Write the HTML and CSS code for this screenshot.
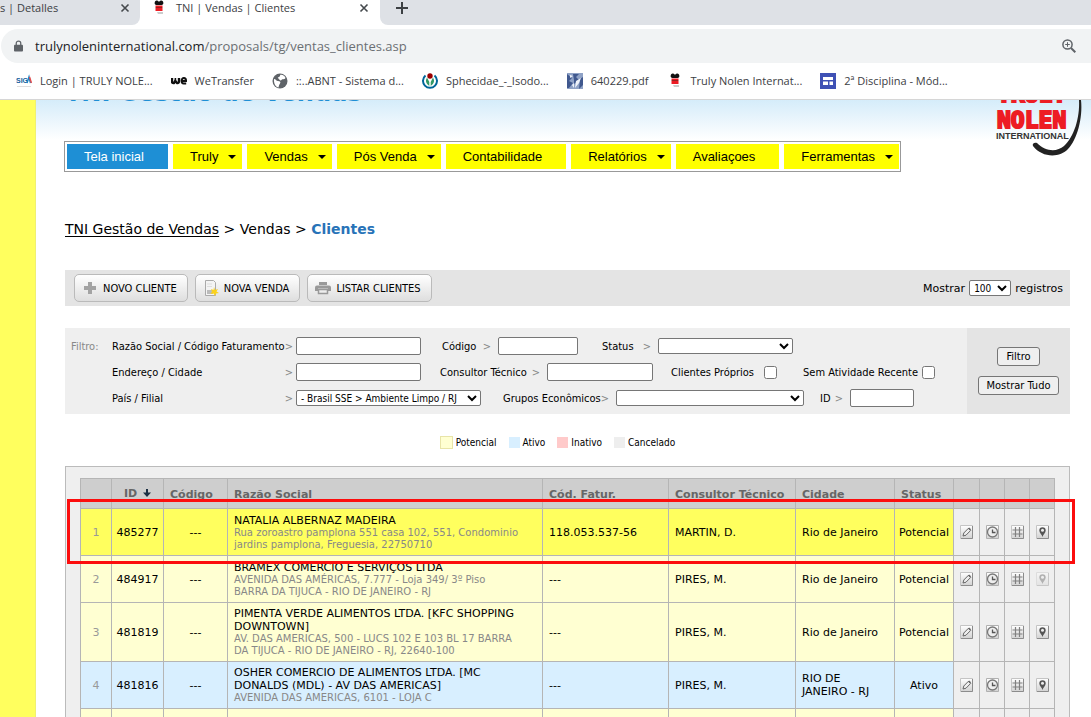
FILE: index.html
```
<!DOCTYPE html>
<html lang="pt-BR">
<head>
<meta charset="utf-8">
<title>TNI | Vendas | Clientes</title>
<link rel="stylesheet" href="styles.css">
</head>
<body>
<svg class="defs" aria-hidden="true">
  <defs>
    <linearGradient id="tile" x1="0" y1="0" x2="0" y2="1"><stop offset="0" stop-color="#fff"/><stop offset="1" stop-color="#d2d2d2"/></linearGradient>
    <symbol id="i-edit" viewBox="0 0 13 14"><path d="M.5.5h12v13h-12z" fill="url(#tile)" stroke="#c4c4c4"/><path d="M12.5 1v12.500H1" fill="none" stroke="#8c8c8c"/><path d="M3 11l.8-3L8.500 3.200l2.200 2.200L6 10.200z" fill="#eee" stroke="#666"/><path d="M8 3.500l1.200-1 1.800 1.800-1 1.200z" fill="#666"/></symbol>
    <symbol id="i-clock" viewBox="0 0 13 14"><path d="M.5.5h12v13h-12z" fill="url(#tile)" stroke="#b0b0b0"/><circle cx="6.500" cy="7" r="5" fill="#eee" stroke="#777" stroke-width="1.300"/><path d="M6.500 4.500v3h3" fill="none" stroke="#555" stroke-width="1.300"/></symbol>
    <symbol id="i-grid" viewBox="0 0 13 14"><path d="M.5.5h12v13h-12z" fill="url(#tile)" stroke="#c4c4c4"/><path d="M12.500 1v12.500H1" fill="none" stroke="#8c8c8c"/><path d="M4.500 2v10M8.500 2v10M1.500 5h10M1.500 9h10" stroke="#808080" stroke-width="1.200"/></symbol>
    <symbol id="i-pin" viewBox="0 0 13 14"><path d="M.5.5h12v13h-12z" fill="url(#tile)" stroke="#c4c4c4"/><path d="M12.500 1v12.500H1" fill="none" stroke="#8c8c8c"/><path d="M6.500 12C6 9.500 3.300 8 3.300 5.500a3.200 3.200 0 0 1 6.400 0C9.700 8 7 9.500 6.500 12z" fill="#555"/><circle cx="6.500" cy="5.300" r="1.500" fill="#eee"/></symbol>
    <symbol id="i-ant" viewBox="0 0 16 16"><path d="M4 1.500c1.200-1.500 3-1 4 .5 1-1.500 2.800-2 4-.5 1 2 0 3.500-1.500 3.500h-5C4 5 3 3.500 4 1.500z" fill="#111"/><path d="M4.500 5.500h7V7h-7zM4.500 8h7v3h-7z" fill="#ed1c24"/><path d="M4.500 7h7v1h-7z" fill="#922"/><path d="M6 12h6v2H7z" fill="#ccc"/></symbol>
    <symbol id="i-close" viewBox="0 0 10 10"><path d="M1.500 1.500l7 7M8.500 1.500l-7 7" stroke="#45494d" stroke-width="1.600"/></symbol>
  </defs>
</svg>

<header class="browser">
  <div class="tabs">
    <div class="tab tab-idle"><span>s | Detalles</span><svg class="close"><use href="#i-close"/></svg></div>
    <div class="tab tab-active"><svg class="fav"><use href="#i-ant"/></svg><span>TNI | Vendas | Clientes</span><svg class="close"><use href="#i-close"/></svg></div>
    <div class="tab-rest"><svg class="plus" viewBox="0 0 12 12"><path d="M6 0v12M0 6h12" stroke="#3c4043" stroke-width="2"/></svg></div>
  </div>
  <div class="address">
    <svg class="lock" viewBox="0 0 10 12"><path d="M1 4.500h8q1 0 1 1V11q0 1-1 1H1q-1 0-1-1V5.500q0-1 1-1z" fill="#5f6368"/><path d="M2.500 5V3a2.500 2.300 0 0 1 5 0v2" fill="none" stroke="#5f6368" stroke-width="1.400"/></svg>
    <span class="url"><b>trulynoleninternational.com</b>/proposals/tg/ventas_clientes.asp</span>
    <svg class="lens" viewBox="0 0 14 14"><circle cx="5.500" cy="5.500" r="4.600" fill="none" stroke="#5f6368" stroke-width="1.500"/><path d="M9 9l4.300 4.300" stroke="#5f6368" stroke-width="2"/><path d="M5.500 3.200v4.600M3.200 5.500h4.600" stroke="#5f6368"/></svg>
  </div>
  <nav class="bookmarks">
    <a href="#"><svg viewBox="0 0 16 16"><text x="0" y="10" class="siga">SIG</text><path d="M11 10l2-6 1.500 6" fill="none" stroke="#1d84c6" stroke-width="1.500"/><path d="M13.500 4l2 6" stroke="#e34b4b" stroke-width="1.500"/><path d="M1 13.500h14" stroke="#ddd"/></svg>Login | TRULY NOLE...</a>
    <a href="#"><svg viewBox="0 0 16 16"><path d="M1 5v3.500q0 2 2 1.500l1.300-2L6 10q2 .5 2-2V5" fill="none" stroke="#111" stroke-width="2.400"/><path d="M4.400 5v4" stroke="#111" stroke-width="1.600"/><path d="M15.200 10.500h-2.500A2.200 2.700 0 1 1 15 8h-4" fill="none" stroke="#111" stroke-width="2"/></svg>WeTransfer</a>
    <a href="#"><svg viewBox="0 0 16 16"><circle cx="8" cy="8" r="7.500" fill="#5f6368"/><path d="M2 6c2 0 2 2 4 2s3 1 2 2.500-1 2-1.500 4C4 14 1.500 11 2 6zM8 2c2-1 5 1 5.500 3-1 2-3 .5-4 2S7 6 6 5s3-1 2-3z" fill="#fff"/></svg>::..ABNT - Sistema d...</a>
    <a href="#"><svg viewBox="0 0 16 16"><path d="M3.500 2.500A7 7 0 1 0 12.500 2.500" fill="none" stroke="#069" stroke-width="2"/><path d="M5 4.500q-3 5 2.300 8.500V9zM11 4.500q3 5-2.300 8.500V9z" fill="#396"/><circle cx="8" cy="3" r="2.700" fill="#900"/></svg>Sphecidae_-_Isodo...</a>
    <a href="#"><svg viewBox="0 0 16 16"><path d="M0 0h16v16H0z" fill="#8fa2c6"/><path d="M0 1l5 4-3 3 4 2-4 5H0zM6 1h6l-3 3 3 3-5 4V7zM13 6l3-2v8l-4 4z" fill="#40588e"/><path d="M3 2l3 1-3 2zM9 8l5-3-2 5-4 5zM5 12l2-2v5z" fill="#eef2fa"/></svg>640229.pdf</a>
    <a href="#"><svg viewBox="0 0 16 16"><use href="#i-ant"/></svg>Truly Nolen Internat...</a>
    <a href="#"><svg viewBox="0 0 16 16"><path d="M0 0h16v16H0z" fill="#3f51b5"/><path d="M3 4h10v3H3zM3 8.500h5V12H3zM9.500 8.500H13V12H9.500z" fill="#fff"/></svg>2ª Disciplina - Mód...</a>
  </nav>
</header>

<div class="page">
  <aside class="stripe"></aside>
  <main class="content">
    <div class="masthead">
      <h1>TNI Gestão de Vendas</h1>
      <svg class="logo" viewBox="0 0 94 60" role="img" aria-label="Truly Nolen International">
        <text x="6" y="2" class="logo-name">TRULY</text>
        <text x="6" y="28" class="logo-name">NOLEN</text>
        <text x="5" y="39" class="logo-sub">INTERNATIONAL</text>
        <path d="M90 0c2 18-4 40-13 49-8 9-26 9-35-3-1-2 1-4 4-3 9 9 20 9 27 3 10-9 16-28 15-46z" fill="#222"/>
      </svg>
    </div>
    <nav class="menu">
      <a href="#" class="current">Tela inicial</a>
      <a href="#" class="more">Truly</a>
      <a href="#" class="more">Vendas</a>
      <a href="#" class="more">Pós Venda</a>
      <a href="#">Contabilidade</a>
      <a href="#" class="more">Relatórios</a>
      <a href="#">Avaliaçoes</a>
      <a href="#" class="more">Ferramentas</a>
    </nav>
    <p class="crumbs"><a href="#">TNI Gestão de Vendas</a> &gt; Vendas &gt; <strong>Clientes</strong></p>

    <div class="toolbar">
      <button type="button"><svg viewBox="0 0 16 16"><path d="M6 2h4v4h4v4h-4v4H6v-4H2V6h4z" fill="#a3a3a3"/></svg>NOVO CLIENTE</button>
      <button type="button"><svg viewBox="0 0 16 16"><path d="M2.500.5h8l2 2v13h-10z" fill="#f4f4f4" stroke="#aaa"/><path d="M4 10h6v4H4z" fill="#bbb"/><path d="M4 4h5M4 6.500h5" stroke="#ddd"/><path d="M11 7l1 3 3-1-1.500 2.500L16 13l-3 .5-1 2.500-1.500-2.500-3 .5 1.500-2.500L8 9l2.500 1z" fill="#fbd21c"/></svg>NOVA VENDA</button>
      <button type="button"><svg viewBox="0 0 16 16"><path d="M4 2h8v3H4zM2 5.500h12q2 0 2 2V11h-3V8.500H3V11H0V7.500q0-2 2-2z" fill="#999"/><path d="M3.500 9.500h9v4h-9z" fill="#eee" stroke="#999" stroke-width="1.500"/></svg>LISTAR CLIENTES</button>
      <label class="page-size">Mostrar <select><option>100</option></select> registros</label>
    </div>

    <form class="filter">
      <div class="fields">
        <div class="line">
          <span class="legend-title">Filtro:</span>
          <label class="lead" for="razao">Razão Social / Código Faturamento <i>&gt;</i></label><input id="razao" class="w-text">
          <label class="l-codigo" for="codigo">Código <i>&gt;</i></label><input id="codigo" class="w-codigo">
          <label class="l-status" for="status">Status <i>&gt;</i></label><select id="status" class="w-status"><option></option></select>
        </div>
        <div class="line">
          <span class="legend-title"></span>
          <label class="lead" for="endereco">Endereço / Cidade <i>&gt;</i></label><input id="endereco" class="w-text">
          <label class="l-consultor" for="consultor">Consultor Técnico <i>&gt;</i></label><input id="consultor" class="w-consultor">
          <label class="l-proprios" for="proprios">Clientes Próprios</label><input id="proprios" type="checkbox">
          <label class="l-recente" for="recente">Sem Atividade Recente</label><input id="recente" type="checkbox">
        </div>
        <div class="line">
          <span class="legend-title"></span>
          <label class="lead" for="pais">País / Filial <i>&gt;</i></label><select id="pais" class="w-pais"><option>- Brasil SSE &gt; Ambiente Limpo / RJ</option></select>
          <label class="l-grupos" for="grupos">Grupos Econômicos <i>&gt;</i></label><select id="grupos" class="w-grupos"><option></option></select>
          <label class="l-id" for="id">ID <i>&gt;</i></label><input id="id" class="w-id">
        </div>
      </div>
      <div class="actions">
        <button type="button">Filtro</button>
        <button type="button">Mostrar Tudo</button>
      </div>
    </form>

    <ul class="key">
      <li class="k-potencial">Potencial</li>
      <li class="k-ativo">Ativo</li>
      <li class="k-inativo">Inativo</li>
      <li class="k-cancelado">Cancelado</li>
    </ul>

    <section class="results">
      <table>
        <colgroup><col class="c-n"><col class="c-id"><col class="c-cod"><col class="c-razao"><col class="c-fat"><col class="c-cons"><col class="c-cid"><col class="c-st"><col class="c-iw"><col class="c-ic"><col class="c-ic"><col class="c-ic"></colgroup>
        <thead>
          <tr><th></th><th class="mid">ID <svg class="sort" viewBox="0 0 8 9"><path d="M4 0v4" stroke="#1b2f42" stroke-width="2"/><path d="M0 3.500h8L4 8z" fill="#1b2f42"/></svg></th><th>Código</th><th>Razão Social</th><th>Cód. Fatur.</th><th>Consultor Técnico</th><th>Cidade</th><th>Status</th><th></th><th></th><th></th><th></th></tr>
        </thead>
        <tbody>
          <tr class="potencial marked"><td class="num">1</td><td class="mid">485277</td><td class="mid">---</td><td>NATALIA ALBERNAZ MADEIRA<small>Rua zoroastro pamplona 551 casa 102, 551, Condominio jardins pamplona, Freguesia, 22750710</small></td><td>118.053.537-56</td><td>MARTIN, D.</td><td>Rio de Janeiro</td><td class="mid">Potencial</td>
            <td class="act"><button aria-label="Editar"><svg><use href="#i-edit"/></svg></button></td><td class="act"><button aria-label="Histórico"><svg><use href="#i-clock"/></svg></button></td><td class="act"><button aria-label="Tabela"><svg><use href="#i-grid"/></svg></button></td><td class="act"><button aria-label="Mapa"><svg><use href="#i-pin"/></svg></button></td></tr>
          <tr class="potencial"><td class="num">2</td><td class="mid">484917</td><td class="mid">---</td><td>BRAMEX COMERCIO E SERVIÇOS LTDA<small>AVENIDA DAS AMÉRICAS, 7.777 - Loja 349/ 3º Piso<br>BARRA DA TIJUCA - RIO DE JANEIRO - RJ</small></td><td>---</td><td>PIRES, M.</td><td>Rio de Janeiro</td><td class="mid">Potencial</td>
            <td class="act"><button aria-label="Editar"><svg><use href="#i-edit"/></svg></button></td><td class="act"><button aria-label="Histórico"><svg><use href="#i-clock"/></svg></button></td><td class="act"><button aria-label="Tabela"><svg><use href="#i-grid"/></svg></button></td><td class="act"><button aria-label="Mapa" disabled><svg><use href="#i-pin"/></svg></button></td></tr>
          <tr class="potencial"><td class="num">3</td><td class="mid">481819</td><td class="mid">---</td><td>PIMENTA VERDE ALIMENTOS LTDA. [KFC SHOPPING DOWNTOWN]<small>AV. DAS AMERICAS, 500 - LUCS 102 E 103 BL 17 BARRA<br>DA TIJUCA - RIO DE JANEIRO - RJ, 22640-100</small></td><td>---</td><td>PIRES, M.</td><td>Rio de Janeiro</td><td class="mid">Potencial</td>
            <td class="act"><button aria-label="Editar"><svg><use href="#i-edit"/></svg></button></td><td class="act"><button aria-label="Histórico"><svg><use href="#i-clock"/></svg></button></td><td class="act"><button aria-label="Tabela"><svg><use href="#i-grid"/></svg></button></td><td class="act"><button aria-label="Mapa"><svg><use href="#i-pin"/></svg></button></td></tr>
          <tr class="ativo"><td class="num">4</td><td class="mid">481816</td><td class="mid">---</td><td>OSHER COMERCIO DE ALIMENTOS LTDA. [MC DONALDS (MDL) - AV DAS AMERICAS]<small>AVENIDA DAS AMERICAS, 6101 - LOJA C</small></td><td>---</td><td>PIRES, M.</td><td>RIO DE JANEIRO - RJ</td><td class="mid">Ativo</td>
            <td class="act"><button aria-label="Editar"><svg><use href="#i-edit"/></svg></button></td><td class="act"><button aria-label="Histórico"><svg><use href="#i-clock"/></svg></button></td><td class="act"><button aria-label="Tabela"><svg><use href="#i-grid"/></svg></button></td><td class="act"><button aria-label="Mapa"><svg><use href="#i-pin"/></svg></button></td></tr>
          <tr class="potencial"><td></td><td></td><td></td><td></td><td></td><td></td><td></td><td></td><td></td><td></td><td></td><td></td></tr>
        </tbody>
      </table>
      <div class="highlight"></div>
    </section>
  </main>
</div>
</body>
</html>
```

FILE: styles.css
```
* { box-sizing: border-box; }
body {
  margin: 0;
  height: 100vh;
  overflow: hidden;
  display: flex;
  flex-direction: column;
  background: #fff;
  color: #000;
  font: 11px/13px "DejaVu Sans", Verdana, sans-serif;
}
.defs { position: absolute; width: 0; height: 0; }
a { color: inherit; text-decoration: none; }

/* browser frame */
.browser {
  flex: none;
  border-bottom: 1px solid #d6d6d6;
  font: 11px/16px "Open Sans", "Segoe UI", sans-serif;
  color: #3c4043;
}
.tabs { display: flex; height: 25px; background: #fff; }
.tab { display: flex; align-items: flex-start; }
.tab-idle { width: 140px; background: #dee1e6; border-bottom-right-radius: 8px; justify-content: space-between; padding-right: 10px; }
.tab-active { width: 240px; padding: 0 11px 0 11px; }
.tab-active span { margin-left: 9px; flex: 1; }
.tab-rest { flex: 1; background: #dee1e6; border-bottom-left-radius: 8px; padding: 2px 0 0 16px; }
.fav { width: 16px; height: 16px; }
.close { width: 10px; height: 10px; margin-top: 3px; }
.plus { width: 12px; height: 12px; display: block; }
.address {
  display: flex;
  align-items: center;
  height: 34px;
  margin: 4px 0 0 1px;
  padding: 0 15px 0 13px;
  border-radius: 17px 0 0 17px;
  background: #f1f3f4;
}
.lock { width: 9px; height: 12px; }
.url { flex: 1; margin-left: 12px; font-size: 13px; line-height: 20px; color: #6b6f73; }
.url b { font-weight: 400; color: #202124; }
.lens { width: 14px; height: 14px; }
.bookmarks { display: flex; gap: 18px; height: 36px; padding-left: 16px; align-items: center; white-space: nowrap; }
.bookmarks a { display: flex; align-items: center; gap: 8px; }
.bookmarks svg { width: 16px; height: 16px; flex: none; }
.siga { font: bold 7px "Liberation Sans", sans-serif; fill: #12609c; }

/* page */
.page { flex: 1; display: flex; min-height: 0; overflow: hidden; }
.stripe { flex: none; width: 36px; background: #ffff5e; border-right: 1px solid #f0f070; }
.content {
  flex: 1;
  min-width: 0;
  padding: 0 21px 0 29px;
  background: linear-gradient(#d5ecfa, #fff 40px);
}
.masthead { display: flex; justify-content: space-between; height: 41px; margin-right: -15px; }
h1 { margin: -23px 0 0; font: bold 24px/32px "DejaVu Sans", Verdana, sans-serif; color: #1e8fd5; white-space: nowrap; }
.logo { flex: none; width: 94px; height: 60px; }
.logo-name { font: bold 23px "DejaVu Sans Mono", monospace; fill: #ed1c24; stroke: #ed1c24; stroke-width: 2px; }
.logo-sub { font: bold 9px "Liberation Sans", sans-serif; fill: #333; }

.menu {
  display: flex;
  gap: 5px;
  width: fit-content;
  margin-left: -1px;
  padding: 2px 1px 2px 2px;
  border: 1px solid #999;
  background: #fff;
  font: 13px/25px "Liberation Sans", Arial, sans-serif;
}
.menu a { position: relative; padding: 0 24px 0 17px; background: #ff0; white-space: nowrap; }
.menu .current { background: #1e8fd5; color: #fff; }
.more::after {
  content: "";
  position: absolute;
  right: 6px;
  top: 11px;
  border: 4px solid transparent;
  border-top-color: #000;
  border-bottom: 0;
}
.crumbs { margin: 48px 0 32px; font-size: 14px; line-height: 18px; }
.crumbs a { text-decoration: underline; text-underline-offset: 2px; }
.crumbs strong { color: #2873b8; }

button, input, select { font: 11px "DejaVu Sans Condensed", Tahoma, sans-serif; color: #000; margin: 0; }
input, select { border: 1px solid #767676; border-radius: 2px; background-color: #fff; }
input:not([type]) { height: 18px; padding: 0 2px; }
select { height: 16px; padding: 0; font-size: 10px; }

.toolbar { display: flex; align-items: center; gap: 7px; height: 36px; padding: 0 7px 0 9px; background: #e4e4e4; }
.toolbar button {
  display: flex;
  align-items: center;
  gap: 5px;
  height: 28px;
  padding: 0 10px 0 7px;
  border: 1px solid #bababa;
  border-radius: 5px;
  background: linear-gradient(#fff, #dedede);
}
.toolbar button svg { width: 16px; height: 16px; }
.page-size { display: flex; align-items: center; gap: 4px; margin-left: auto; }
.page-size select { width: 42px; }

.filter { display: flex; margin-top: 22px; background: #efefef; font-family: "DejaVu Sans Condensed", Tahoma, sans-serif; }
.fields { flex: 1; padding: 5px 0 3px 6px; }
.line { display: flex; align-items: center; height: 26px; white-space: nowrap; }
.line > * { flex: none; }
.line label { display: flex; justify-content: space-between; }
.line i { font-style: normal; color: #888; padding-right: 3px; }
.legend-title { width: 41px; color: #888; }
.lead { width: 184px; }
.w-text { width: 125px; }
.w-codigo { width: 80px; }
.w-status { width: 135px; }
.w-consultor { width: 106px; }
.w-pais { width: 185px; }
.w-grupos { width: 188px; }
.w-id { width: 64px; }
.line .l-codigo { width: 56px; margin-left: 21px; padding-right: 4px; }
.line .l-status { width: 56px; margin-left: 24px; padding-right: 4px; }
.line .l-consultor { width: 107px; margin-left: 19px; padding-right: 4px; }
.line .l-proprios { width: 93px; margin-left: 18px; }
.line .l-recente { width: 119px; margin-left: 26px; }
.line .l-grupos { width: 113px; margin-left: 22px; padding-right: 4px; }
.line .l-id { width: 30px; margin-left: 16px; padding-right: 4px; }
.actions { display: flex; flex-direction: column; align-items: center; justify-content: center; gap: 10px; width: 103px; background: #e4e4e4; }
.actions button { height: 19px; padding: 0 8px; border: 1px solid #767676; border-radius: 3px; background: #efefef; }

.key { display: flex; justify-content: center; gap: 12px; margin: 22px 0 17px; padding: 0 20px 0 0; list-style: none; font: 10px/12px "DejaVu Sans Condensed", Tahoma, sans-serif; }
.key li { display: flex; align-items: center; gap: 3px; }
.key li::before { content: ""; width: 11px; height: 11px; background: #eee; }
.key .k-potencial::before { background: #ffffd2; border: 1px solid #e8e4a8; }
.key .k-ativo::before { background: #d8efff; }
.key .k-inativo::before { background: #ffcaca; }

.results { position: relative; padding: 11px 14px; border: 1px solid #bbb; background: #efefef; }
table { width: 100%; table-layout: fixed; border-collapse: collapse; }
th, td { border: 1px solid #b5b5b5; padding: 4px 6px; text-align: left; overflow-wrap: normal; }
th { height: 30px; padding: 5px 6px 4px; background: #cecece; color: #666; white-space: nowrap; }
td { height: 47px; }
td:nth-child(-n+8) { background: #ffffd2; }
.marked td:nth-child(-n+8) { background: #ffff5e; }
.ativo td:nth-child(-n+8) { background: #d8efff; }
.mid, .num { text-align: center; padding: 4px 2px; }
.num { color: #999; }
small { display: block; color: #888; font-size: 10px; line-height: 12px; }
.c-n { width: 31px; }
.c-id { width: 52px; }
.c-cod { width: 64px; }
.c-fat { width: 126px; }
.c-cons { width: 127px; }
.c-cid { width: 99px; }
.c-st { width: 59px; }
.c-ic { width: 25px; }
.c-iw { width: 26px; }
.act { padding: 0; }
.act button { display: block; margin: 0 auto; padding: 0; border: 0; background: none; }
.act button:disabled { opacity: .4; }
.act svg { display: block; width: 13px; height: 14px; }
.sort { width: 8px; height: 9px; margin-left: 2px; vertical-align: -1px; }
.highlight { position: absolute; top: 32px; left: 1px; right: -6px; height: 65px; border: 3px solid #fc0d0d; }
```
